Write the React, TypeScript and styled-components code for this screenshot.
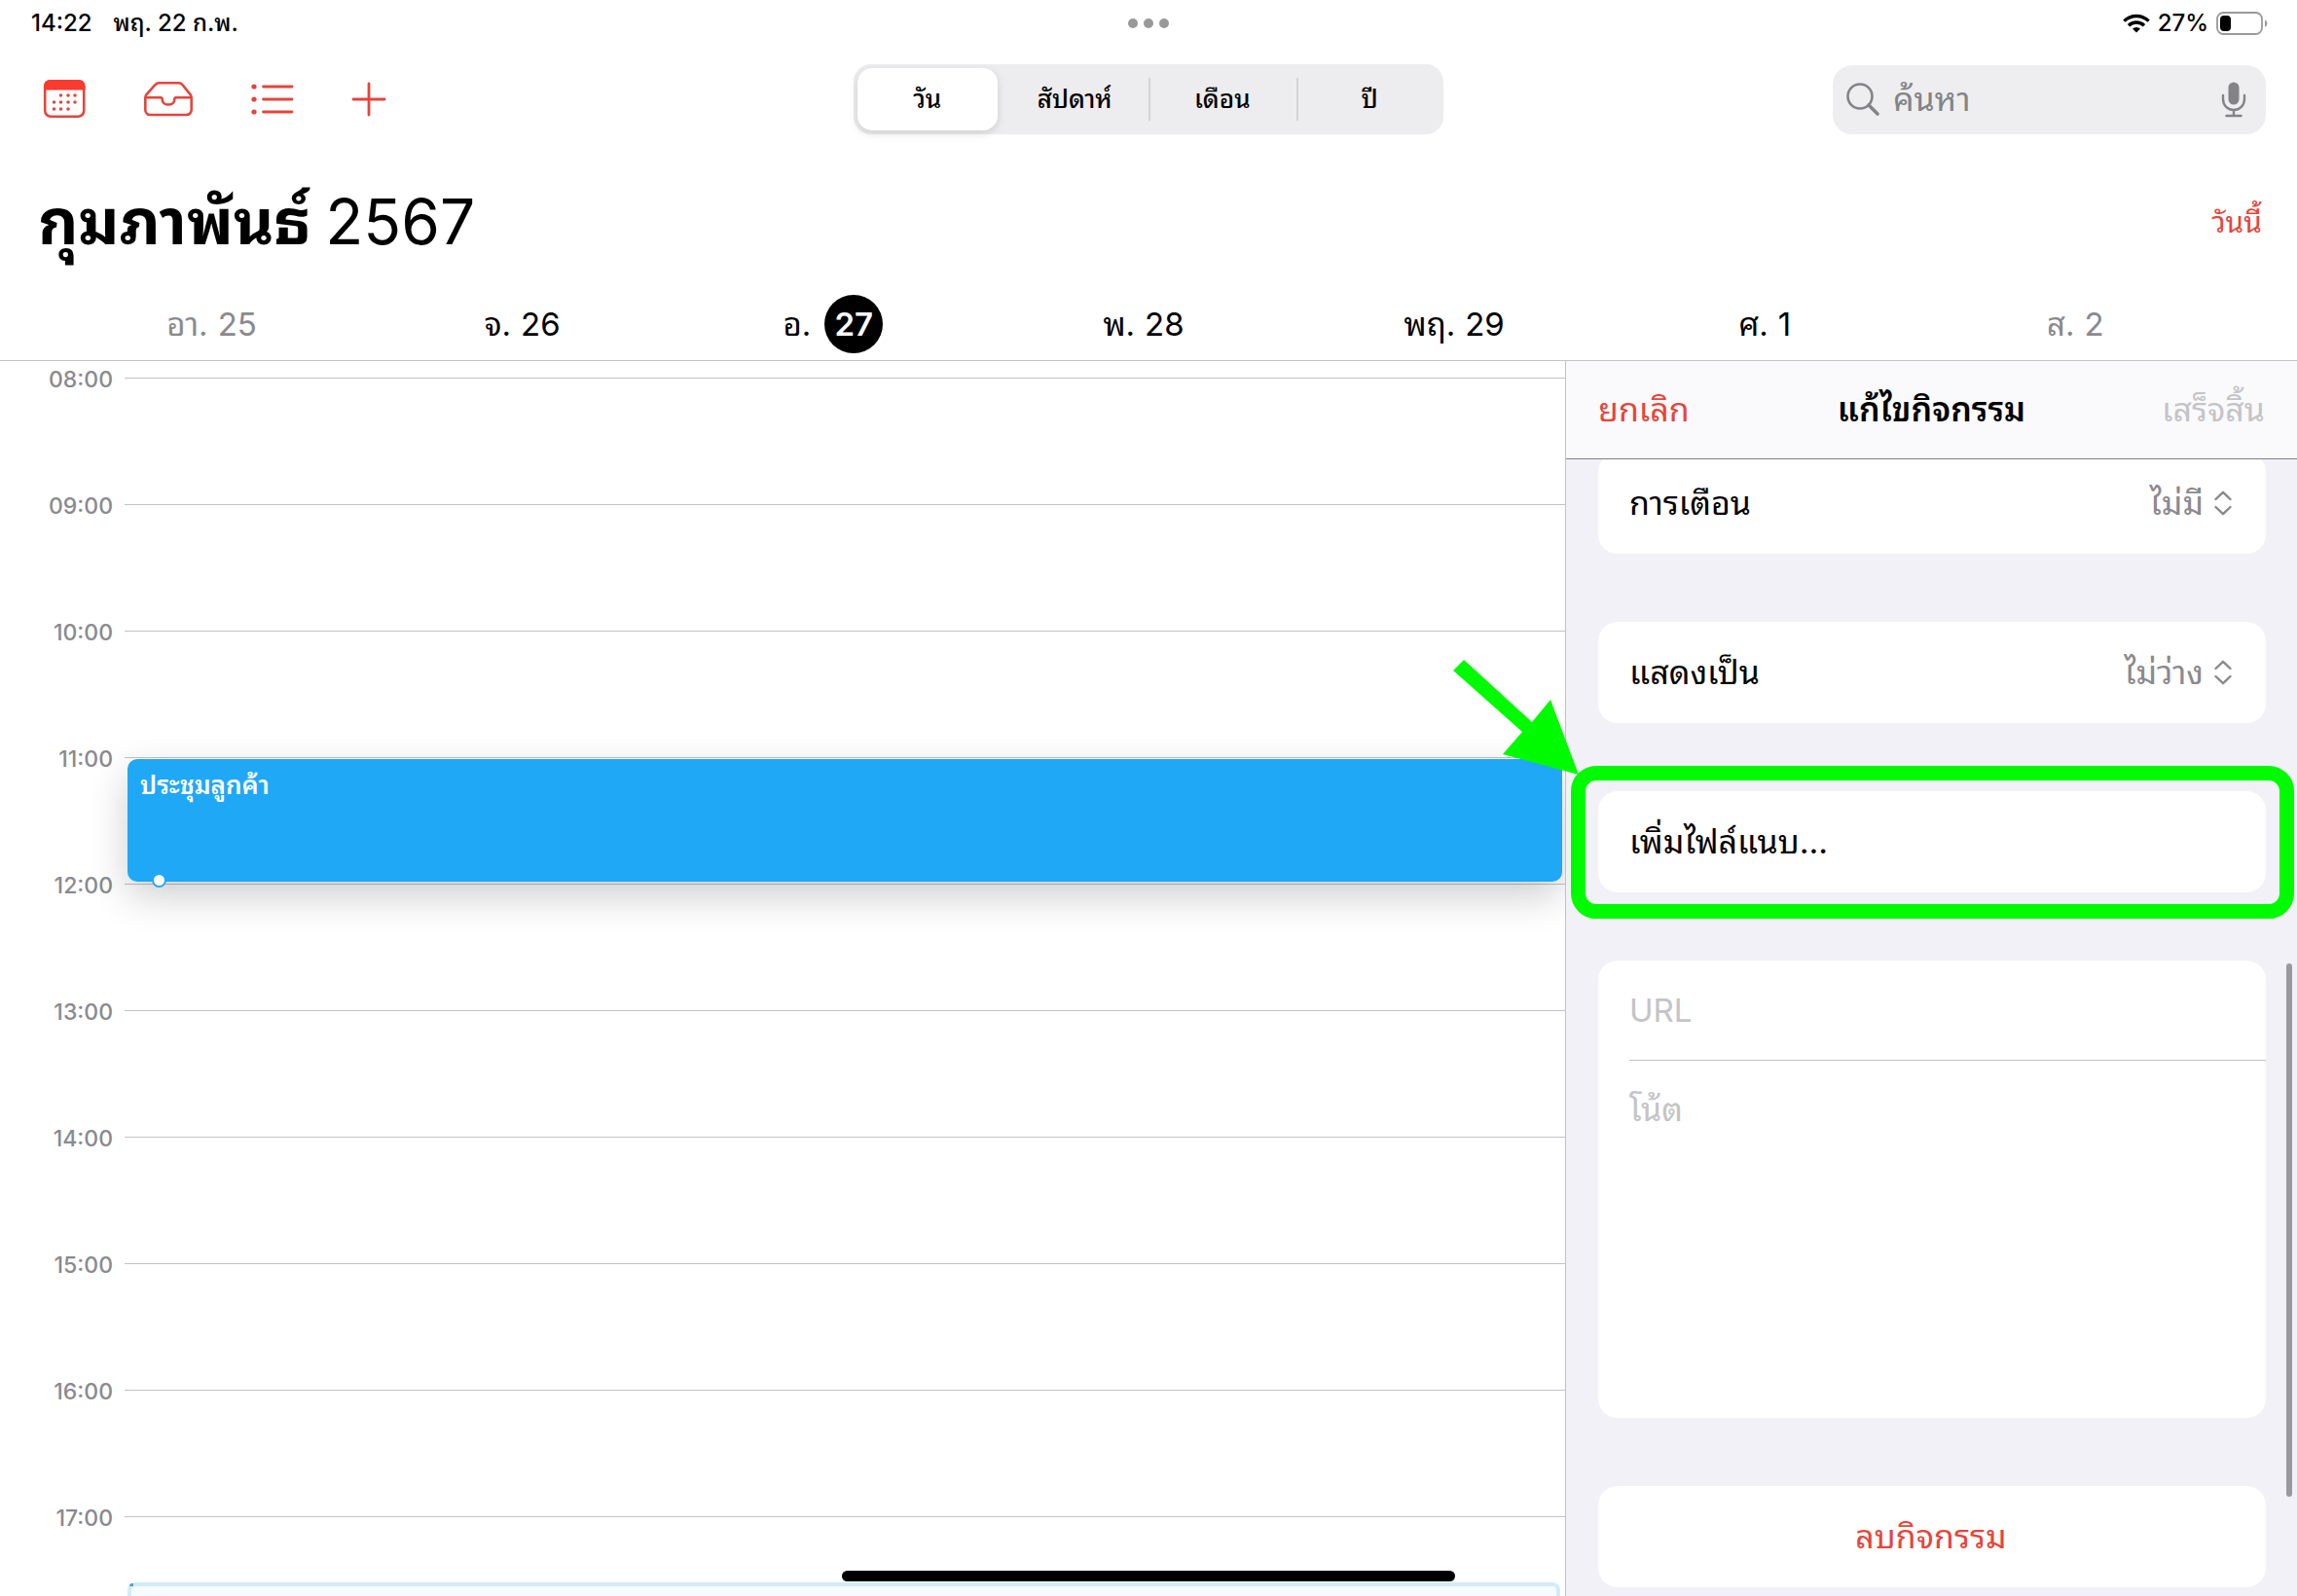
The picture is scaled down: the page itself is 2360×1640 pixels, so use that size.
import React from 'react';
import styled, { createGlobalStyle } from 'styled-components';

const red = '#e5453d';
const gray = '#8a8a8e';
const line = '#c3c3c6';

const GlobalStyle = createGlobalStyle`
  * { box-sizing: border-box; }
  body { margin: 0; background: #fff; }
  body, button, input, textarea, select {
    font-family: Inter, "Noto Sans Thai Looped", "Noto Sans Thai", Loma, "Noto Sans", sans-serif;
  }
  button { border: 0; padding: 0; background: none; color: inherit; cursor: pointer; }
`;

const Screen = styled.div`
  position: relative;
  display: flex;
  flex-direction: column;
  height: 100vh;
  overflow: hidden;
  color: #000;
`;

const StatusBar = styled.div`
  position: relative;
  display: flex;
  align-items: center;
  justify-content: space-between;
  height: 48px;
  padding: 0 30px 0 32px;
  font-size: 24px;
  font-weight: 500;
  line-height: 36px;
`;
const StatusGroup = styled.div<{ $gap: number }>`
  display: flex;
  align-items: center;
  gap: ${(p) => p.$gap}px;
`;
const Multitask = styled.button`
  position: absolute;
  left: 50%;
  top: 50%;
  transform: translate(-50%, -50%);
  display: flex;
  gap: 6px;
  span { width: 10px; height: 10px; border-radius: 50%; background: #999; }
`;

const Toolbar = styled.header`
  display: grid;
  grid-template-columns: 1fr auto 1fr;
  align-items: center;
  height: 108px;
  padding: 0 32px;
`;
const Tools = styled.nav`
  display: flex;
  align-items: center;
  gap: 59px;
  padding-left: 8px;
`;
const ToolButton = styled.button`
  display: flex;
  color: ${red};
`;
const Segments = styled.div`
  display: grid;
  grid-template-columns: repeat(4, 1fr);
  width: 606px;
  height: 72px;
  border-radius: 18px;
  background: #ededef;
`;
const SegmentCell = styled.div<{ $divided: boolean }>`
  display: flex;
  padding: 4px;
  background: ${(p) => (p.$divided ? 'linear-gradient(#d3d3d6, #d3d3d6) left center / 2px 44px no-repeat' : 'none')};
`;
const Segment = styled.button<{ $on: boolean }>`
  flex: 1;
  border-radius: 15px;
  font-size: 26px;
  font-weight: 500;
  line-height: 36px;
  background: ${(p) => (p.$on ? '#fff' : 'transparent')};
  box-shadow: ${(p) => (p.$on ? '0 3px 10px rgba(0, 0, 0, 0.13)' : 'none')};
`;
const Search = styled.label`
  justify-self: end;
  display: flex;
  align-items: center;
  gap: 13px;
  width: 445px;
  height: 71px;
  padding: 0 19px 0 13px;
  border-radius: 20px;
  background: #eeeef0;
  color: #838387;
`;
const SearchInput = styled.input`
  flex: 1;
  min-width: 0;
  border: 0;
  padding: 0;
  outline: 0;
  background: none;
  font-size: 34px;
  line-height: 56px;
  appearance: none;
  &::placeholder { color: #838387; opacity: 1; }
`;

const TitleRow = styled.div`
  display: flex;
  align-items: center;
  justify-content: space-between;
  height: 140px;
  padding: 4px 36px 0 39px;
`;
const Title = styled.h1`
  margin: 0;
  font-size: 64px;
  font-weight: 700;
  line-height: 100px;
  span { font-weight: 400; }
`;
const Today = styled.button`
  color: ${red};
  font-size: 30px;
  line-height: 48px;
`;

const Week = styled.div`
  display: grid;
  grid-template-columns: repeat(7, 1fr);
  height: 75px;
  padding: 0 68px 0 58px;
  border-bottom: 1px solid ${line};
`;
const Day = styled.button<{ $muted: boolean }>`
  display: flex;
  align-items: center;
  justify-content: center;
  gap: 10px;
  font-size: 33px;
  line-height: 56px;
  color: ${(p) => (p.$muted ? gray : '#000')};
`;
const Selected = styled.span`
  display: flex;
  align-items: center;
  justify-content: center;
  width: 60px;
  height: 60px;
  margin-left: 4px;
  border-radius: 50%;
  background: #000;
  color: #fff;
  font-weight: 600;
`;

const Main = styled.main`
  flex: 1;
  min-height: 0;
  display: grid;
  grid-template-columns: minmax(0, 1fr) 752px;
`;
const Timeline = styled.section`
  min-height: 0;
  padding-top: 6px;
  overflow: hidden;
`;
const HourRow = styled.div`
  position: relative;
  display: grid;
  grid-template-columns: 116px 1fr;
  column-gap: 12px;
  height: 130px;
`;
const HourLabel = styled.time`
  text-align: right;
  font-size: 23px;
  font-weight: 500;
  line-height: 26px;
  color: ${gray};
`;
const HourLine = styled.div`
  height: 1px;
  margin-top: 11px;
  background: ${line};
`;
const Event = styled.button`
  position: absolute;
  z-index: 1;
  top: 13px;
  left: 131px;
  right: 3px;
  height: 126px;
  display: flex;
  padding: 9px 13px;
  border-radius: 10px;
  background: #1fa8f6;
  box-shadow: 0 14px 40px rgba(0, 0, 0, 0.2);
  color: #fff;
  font-size: 26px;
  font-weight: 600;
  line-height: 36px;
`;
const Handle = styled.span`
  position: absolute;
  left: 25px;
  bottom: -6px;
  width: 15px;
  height: 15px;
  border: 2px solid #1fa8f6;
  border-radius: 50%;
  background: #fff;
`;
const NextEvent = styled.div`
  position: absolute;
  top: 79px;
  left: 131px;
  right: 5px;
  height: 65px;
  border: 4px solid #d3ebf9;
  border-radius: 8px 8px 0 0;
  background: #f5fbff;
  &::before {
    content: "";
    position: absolute;
    left: -2px;
    top: -3px;
    width: 4px;
    height: 3px;
    border-radius: 3px 0 0 0;
    background: #4aa6cf;
  }
`;

const Panel = styled.aside`
  border-left: 1px solid ${line};
  background: #f2f1f7;
`;
const PanelHeader = styled.div`
  position: relative;
  z-index: 1;
  display: grid;
  grid-template-columns: 1fr auto 1fr;
  align-items: center;
  height: 101px;
  padding: 0 33px;
  border-bottom: 1px solid #808085;
  background: #fafafc;
`;
const PanelTitle = styled.h2`
  margin: 0;
  font-size: 34px;
  font-weight: 600;
  line-height: 56px;
`;
const PanelAction = styled.button<{ $end?: boolean }>`
  justify-self: ${(p) => (p.$end ? 'end' : 'start')};
  color: ${(p) => (p.$end ? '#c4c4c7' : red)};
  font-size: 34px;
  line-height: 56px;
`;
const Form = styled.form`
  display: flex;
  flex-direction: column;
  gap: 70px;
  margin-top: -7px;
  padding: 0 32px 0 33px;
`;
const Card = styled.div`
  position: relative;
  display: flex;
  align-items: center;
  height: 104px;
  padding: 0 34px 0 32px;
  border-radius: 20px;
  background: #fff;
  font-size: 34px;
  line-height: 56px;
`;
const FieldName = styled.label`
  flex: 1;
`;
const Picker = styled.select`
  appearance: none;
  border: 0;
  padding: 0;
  margin-right: 10px;
  background: none;
  color: ${gray};
  font-size: 34px;
  line-height: 56px;
  height: 56px;
  text-align-last: right;
`;
const CardButton = styled.button<{ $danger?: boolean }>`
  flex: 1;
  align-self: stretch;
  text-align: ${(p) => (p.$danger ? 'center' : 'left')};
  color: ${(p) => (p.$danger ? red : '#000')};
  font-size: 34px;
  line-height: 56px;
`;
const NotesCard = styled.div`
  display: flex;
  flex-direction: column;
  height: 470px;
  padding-left: 32px;
  border-radius: 20px;
  background: #fff;
`;
const UrlInput = styled.input`
  height: 103px;
  border: 0;
  border-bottom: 1px solid ${line};
  padding: 0;
  outline: 0;
  background: none;
  font-size: 33px;
  &::placeholder { color: #c4c4c7; opacity: 1; }
`;
const Notes = styled.textarea`
  flex: 1;
  border: 0;
  padding: 22px 0;
  outline: 0;
  resize: none;
  background: none;
  font-size: 34px;
  line-height: 56px;
  &::placeholder { color: #c4c4c7; opacity: 1; }
`;
const Highlight = styled.div`
  position: absolute;
  inset: -26px -29px -27px -28px;
  border: 15px solid #00fb00;
  border-radius: 26px;
  pointer-events: none;
`;
const Arrow = styled.svg`
  position: absolute;
  z-index: 2;
  left: -152px;
  top: -137px;
  pointer-events: none;
`;
const ScrollThumb = styled.div`
  position: absolute;
  top: 990px;
  right: 5px;
  width: 6px;
  height: 548px;
  border-radius: 3px;
  background: #99999e;
`;
const HomeIndicator = styled.div`
  position: absolute;
  z-index: 3;
  left: 50%;
  bottom: 15px;
  width: 630px;
  height: 11px;
  transform: translateX(-50%);
  border-radius: 6px;
  background: #000;
`;

const CalendarIcon = () => (
  <svg width="48" height="48" viewBox="0 0 48 48" fill="none" aria-hidden="true">
    <rect x="6.2" y="5.2" width="40" height="36.600" rx="6" stroke={red} strokeWidth="2.600" />
    <path d="M5 14.500V10a6 6 0 0 1 6-6h30.500a6 6 0 0 1 6 6v4.500z" fill="#fb3a30" />
    <g fill={red}>
      {[[22.500, 20], [30, 20], [37, 20], [15.500, 27], [22.500, 27], [30, 27], [37, 27], [15.500, 34], [22.500, 34], [30, 34]].map(([x, y]) => (
        <circle key={`${x}-${y}`} cx={x} cy={y} r="1.800" />
      ))}
    </g>
  </svg>
);
const InboxIcon = () => (
  <svg width="52" height="40" viewBox="0 0 52 40" fill="none" stroke={red} strokeWidth="2.600" strokeLinejoin="round" aria-hidden="true">
    <path d="M2.300 18.500V31a5 5 0 0 0 5 5H44.700a5 5 0 0 0 5-5V18.500c0-1.400-.4-2.300-1.200-3.400L40.600 5.200C39.500 3.800 38.200 3.200 36.600 3.200H16.400c-1.600 0-2.900.6-4 2L3.500 15.100c-.8 1.100-1.200 2-1.200 3.400Z" />
    <path d="M2.300 18.300H18.200c.9 0 1.400.5 1.400 1.400 0 3.500 2.800 5.800 6.400 5.800s6.400-2.300 6.400-5.800c0-.9.5-1.400 1.400-1.400H49.700" />
  </svg>
);
const ListIcon = () => (
  <svg width="44" height="34" viewBox="0 0 44 34" fill="none" stroke={red} strokeWidth="2.800" strokeLinecap="round" aria-hidden="true">
    {[4, 17, 30].map((y) => (
      <g key={y}>
        <circle cx="3" cy={y} r="2.600" fill={red} stroke="none" />
        <path d={`M12.500 ${y}H42`} />
      </g>
    ))}
  </svg>
);
const PlusIcon = () => (
  <svg width="36" height="36" viewBox="0 0 36 36" fill="none" stroke={red} strokeWidth="2.800" strokeLinecap="round" aria-hidden="true">
    <path d="M18 2V34M2 18H34" />
  </svg>
);
const WifiIcon = () => (
  <svg width="28" height="20" viewBox="0 0 28 20" fill="none" stroke="#000" strokeWidth="3.400" aria-hidden="true">
    <path d="M1.400 7.600a18 18 0 0 1 25.200 0" />
    <path d="M6 12.200a11.500 11.500 0 0 1 16 0" />
    <path d="M14 19.600l-4-4a5.800 5.800 0 0 1 8 0z" fill="#000" stroke="none" />
  </svg>
);
const BatteryIcon = () => (
  <svg width="53" height="24" viewBox="0 0 53 24" fill="none" aria-hidden="true">
    <rect x="1" y="1" width="46" height="22" rx="6.500" stroke="#999" strokeWidth="1.800" />
    <rect x="4" y="4" width="11" height="16" rx="4" fill="#000" />
    <path d="M50 8.500c3.200 1.200 3.200 6 0 7.200z" fill="#999" />
  </svg>
);
const SearchIcon = () => (
  <svg width="36" height="36" viewBox="0 0 36 36" fill="none" stroke="currentColor" aria-hidden="true">
    <circle cx="15" cy="15" r="12.500" strokeWidth="2.600" />
    <path d="M24 24l9 9" strokeWidth="3.600" strokeLinecap="round" />
  </svg>
);
const MicIcon = () => (
  <svg width="28" height="38" viewBox="0 0 28 38" fill="none" stroke="currentColor" strokeWidth="2.400" strokeLinecap="round" aria-hidden="true">
    <rect x="8.500" y="1.500" width="11" height="23" rx="5.500" fill="currentColor" stroke="none" />
    <path d="M3 15v4a11 11 0 0 0 22 0v-4M14 30v6M6.500 36h15" />
  </svg>
);
const ChevronsIcon = () => (
  <svg width="20" height="26" viewBox="0 0 20 26" fill="none" stroke={gray} strokeWidth="2.400" strokeLinecap="round" strokeLinejoin="round" aria-hidden="true">
    <path d="M2.500 9L10 1.800 17.500 9M2.500 17L10 24.200 17.500 17" />
  </svg>
);

const views = ['วัน', 'สัปดาห์', 'เดือน', 'ปี'];
const days = [
  { name: 'อา.', date: 25, muted: true },
  { name: 'จ.', date: 26 },
  { name: 'อ.', date: 27, selected: true },
  { name: 'พ.', date: 28 },
  { name: 'พฤ.', date: 29 },
  { name: 'ศ.', date: 1 },
  { name: 'ส.', date: 2, muted: true },
];
const hours = ['08:00', '09:00', '10:00', '11:00', '12:00', '13:00', '14:00', '15:00', '16:00', '17:00'];

export default function App() {
  const [view, setView] = React.useState(views[0]);
  return (
    <Screen>
      <GlobalStyle />
      <StatusBar>
        <StatusGroup $gap={22}>
          <span>14:22</span>
          <span>พฤ. 22 ก.พ.</span>
        </StatusGroup>
        <Multitask aria-label="มัลติทาสก์"><span /><span /><span /></Multitask>
        <StatusGroup $gap={8}>
          <WifiIcon />
          <span>27%</span>
          <BatteryIcon />
        </StatusGroup>
      </StatusBar>

      <Toolbar>
        <Tools>
          <ToolButton aria-label="ปฏิทิน"><CalendarIcon /></ToolButton>
          <ToolButton aria-label="กล่องเข้า"><InboxIcon /></ToolButton>
          <ToolButton aria-label="รายการ"><ListIcon /></ToolButton>
          <ToolButton aria-label="เพิ่ม"><PlusIcon /></ToolButton>
        </Tools>
        <Segments role="group" aria-label="มุมมอง">
          {views.map((v, i) => (
            <SegmentCell key={v} $divided={i > 1}>
              <Segment $on={v === view} aria-pressed={v === view} onClick={() => setView(v)}>{v}</Segment>
            </SegmentCell>
          ))}
        </Segments>
        <Search>
          <SearchIcon />
          <SearchInput type="text" placeholder="ค้นหา" aria-label="ค้นหา" />
          <MicIcon />
        </Search>
      </Toolbar>

      <TitleRow>
        <Title>กุมภาพันธ์ <span>2567</span></Title>
        <Today>วันนี้</Today>
      </TitleRow>

      <Week>
        {days.map((d) => (
          <Day key={d.date} $muted={!!d.muted}>
            <span>{d.name}</span>
            {d.selected ? <Selected>{d.date}</Selected> : <span>{d.date}</span>}
          </Day>
        ))}
      </Week>

      <Main>
        <Timeline>
          {hours.map((h) => (
            <HourRow key={h}>
              <HourLabel>{h}</HourLabel>
              <HourLine />
              {h === '11:00' && <Event>ประชุมลูกค้า<Handle /></Event>}
              {h === '17:00' && <NextEvent />}
            </HourRow>
          ))}
        </Timeline>

        <Panel>
          <PanelHeader>
            <PanelAction>ยกเลิก</PanelAction>
            <PanelTitle>แก้ไขกิจกรรม</PanelTitle>
            <PanelAction $end disabled>เสร็จสิ้น</PanelAction>
          </PanelHeader>
          <Form onSubmit={(e) => e.preventDefault()}>
            <Card>
              <FieldName htmlFor="alert">การเตือน</FieldName>
              <Picker id="alert"><option>ไม่มี</option></Picker>
              <ChevronsIcon />
            </Card>
            <Card>
              <FieldName htmlFor="show-as">แสดงเป็น</FieldName>
              <Picker id="show-as"><option>ไม่ว่าง</option></Picker>
              <ChevronsIcon />
            </Card>
            <Card>
              <CardButton type="button">เพิ่มไฟล์แนบ...</CardButton>
              <Highlight />
              <Arrow width="136" height="124" viewBox="0 0 136 124" aria-hidden="true">
                <path d="M14 2L84 66 103 43 132 120 54 99 74 76 3 13z" fill="#00fb00" />
              </Arrow>
            </Card>
            <NotesCard>
              <UrlInput type="url" placeholder="URL" aria-label="URL" />
              <Notes placeholder="โน้ต" aria-label="โน้ต" />
            </NotesCard>
            <Card>
              <CardButton type="button" $danger>ลบกิจกรรม</CardButton>
            </Card>
          </Form>
        </Panel>
      </Main>

      <ScrollThumb />
      <HomeIndicator />
    </Screen>
  );
}
